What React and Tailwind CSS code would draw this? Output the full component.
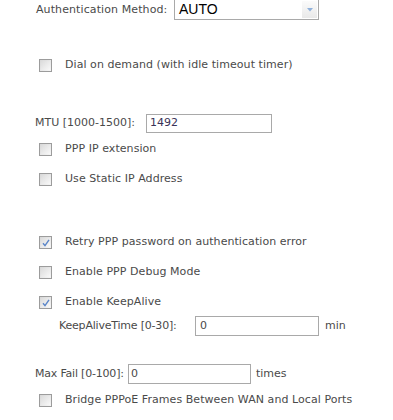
import React from "react";

const font = { fontFamily: '"DejaVu Sans", Verdana, sans-serif' };

function Box({ checked }) {
  return (
    <div className="relative w-[13px] h-[13px] border border-[#9c9c9c] bg-gradient-to-br from-[#d8d8d8] to-[#f6f6f6] shrink-0">
      <div className="absolute inset-[1px] bg-gradient-to-br from-[#dcdcdc] to-[#f8f8f8]" />
      {checked && (
        <svg className="absolute left-[1px] top-[1px]" width="10" height="10" viewBox="0 0 10 10">
          <path d="M2 5.2 L4 7.6 L8 1.8" fill="none" stroke="#5b86c8" strokeWidth="1.4" />
        </svg>
      )}
    </div>
  );
}

function CheckRow({ label, checked, mt }) {
  return (
    <div className={`flex items-center h-[20px] pl-[39px] ${mt}`}>
      <Box checked={checked} />
      <span className="ml-[13px] text-[11px] tracking-[0.06px] text-[#4a4a4a] whitespace-nowrap">{label}</span>
    </div>
  );
}

export default function App() {
  return (
    <div className="w-[393px] h-[420px] bg-white flex flex-col overflow-hidden" style={font}>
      <div className="flex items-center h-[20px] pl-[36px]">
        <span className="text-[11px] tracking-[0.1px] text-[#4a4a4a] w-[138px] whitespace-nowrap">Authentication Method:</span>
        <div className="relative w-[145px] h-[21px] -mt-[1px] border border-[#a9a9a9] bg-white flex items-center">
          <span className="pl-[4px] text-[14px] text-black" style={{ fontFamily: '"Liberation Sans", Arial, sans-serif' }}>AUTO</span>
          <div className="absolute right-[1px] top-[1px] bottom-[1px] w-[15px] bg-gradient-to-b from-[#fbfbfb] to-[#e9e9e9] flex items-center justify-center">
            <svg width="6" height="4" viewBox="0 0 6 4">
              <path d="M0 0 L6 0 L3 3.5 Z" fill="#8fb0da" />
            </svg>
          </div>
        </div>
      </div>

      <CheckRow mt="mt-[35px]" label="Dial on demand (with idle timeout timer)" />

      <div className="flex items-center h-[20px] pl-[35px] mt-[38px]">
        <span className="text-[11px] text-[#4a4a4a] w-[111px] whitespace-nowrap">MTU [1000-1500]:</span>
        <div className="w-[126px] h-[19px] border border-[#a9a9a9] flex items-center pl-[3px] text-[11px] text-[#3a3358]">1492</div>
      </div>

      <CheckRow mt="mt-[6px]" label="PPP IP extension" />
      <CheckRow mt="mt-[10px]" label="Use Static IP Address" />
      <CheckRow mt="mt-[43px]" checked label="Retry PPP password on authentication error" />
      <CheckRow mt="mt-[10px]" label="Enable PPP Debug Mode" />
      <CheckRow mt="mt-[10px]" checked label="Enable KeepAlive" />

      <div className="flex items-center h-[20px] pl-[59px] mt-[4px]">
        <span className="text-[11px] text-[#4a4a4a] w-[136px] whitespace-nowrap tracking-[-0.2px]">KeepAliveTime [0-30]:</span>
        <div className="w-[124px] h-[20px] border border-[#a9a9a9] flex items-center pl-[4px] text-[11px] text-[#4a4a4a]">0</div>
        <span className="ml-[6px] text-[11px] text-[#4a4a4a]">min</span>
      </div>

      <div className="flex items-center h-[20px] pl-[35px] mt-[28px]">
        <span className="text-[11px] text-[#4a4a4a] w-[93px] whitespace-nowrap tracking-[-0.2px]">Max Fail [0-100]:</span>
        <div className="w-[123px] h-[20px] border border-[#a9a9a9] flex items-center pl-[2px] text-[11px] text-[#4a4a4a]">0</div>
        <span className="ml-[5px] text-[11px] text-[#4a4a4a]">times</span>
      </div>

      <CheckRow mt="mt-[6px]" label="Bridge PPPoE Frames Between WAN and Local Ports" />
    </div>
  );
}
